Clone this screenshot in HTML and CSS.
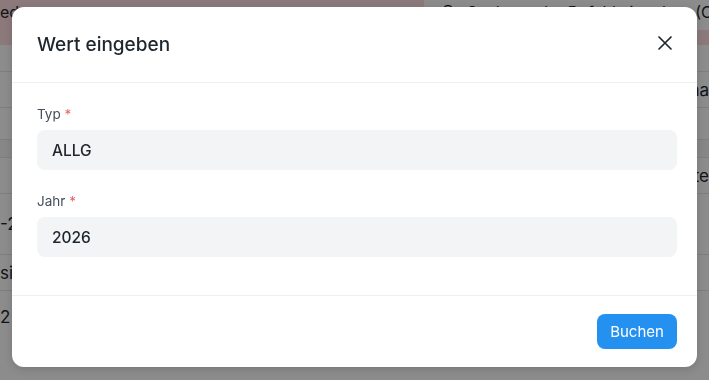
FILE: index.html
```html
<!DOCTYPE html>
<html>
  <head>
    <meta charset="utf-8">
    <title>Wert eingeben</title>
    <link rel="stylesheet" href="styles.css">
  </head>
  <body>
    <!-- page behind the dialog -->
    <div class="app">
      <div class="topbar">
        <div class="alert_strip"><span>ed</span></div>
        <div class="search">
          <svg class="search_icon" width="14" height="14" viewBox="0 0 14 14">
            <circle cx="6" cy="6" r="4.5" fill="none" stroke="#222" stroke-width="1.4"/>
            <path d="M9.5 9.5 L13 13" stroke="#222" stroke-width="1.4"/>
          </svg>
          <span>Suchen oder Befehl eingeben (Ct</span>
        </div>
      </div>
      <div class="alert_band"></div>
      <div class="rows">
        <div class="row row_tall"><span></span><span></span></div>
        <div class="row row_mid"><span></span><span>na</span></div>
        <div class="row row_small"><span></span><span></span></div>
        <div class="row row_band"><span></span><span></span></div>
        <div class="row row_mid"><span></span><span>te</span></div>
        <div class="row row_big"><span>-2</span><span></span></div>
        <div class="row row_mid"><span>si</span><span></span></div>
        <div class="row row_last"><span>2</span><span></span></div>
      </div>
    </div>

    <div class="backdrop"></div>

    <div class="modal">
      <div class="modal_header">
        <h4 class="modal_title">Wert eingeben</h4>
        <button class="close_btn" type="button" aria-label="Schließen">
          <svg width="16" height="16" viewBox="0 0 16 16">
            <path d="M2 2 L14 14 M14 2 L2 14" stroke="#1f272e" stroke-width="1.7" stroke-linecap="round"/>
          </svg>
        </button>
      </div>

      <div class="modal_body">
        <div class="form_group">
          <label class="control_label">Typ <span class="reqd">*</span></label>
          <div class="control_input">ALLG</div>
        </div>
        <div class="form_group">
          <label class="control_label">Jahr <span class="reqd">*</span></label>
          <div class="control_input">2026</div>
        </div>
      </div>

      <div class="modal_footer">
        <button class="btn_primary" type="button">Buchen</button>
      </div>
    </div>
  </body>
</html>
```

FILE: styles.css
```css
/* base */
body {
  margin: 0;
  font-family: Inter, "Noto Sans", sans-serif;
  color: #1f272e;
  overflow: hidden;
  height: 380px;
}

/* page behind the dialog */
.app {
  background: #fff;
  height: 380px;
}

.topbar {
  display: flex;
  height: 30px;
}

.alert_strip {
  width: 424px;
  flex-shrink: 0;
  background: #ffdce2;
  font-size: 16px;
  line-height: 24px;
  color: #1f272e;
}

.search {
  flex: 1;
  display: flex;
  align-items: flex-start;
  gap: 11px;
  padding: 2px 0 0 18px;
  font-size: 16px;
  white-space: nowrap;
  overflow: hidden;
  color: #1f272e;
}

.search_icon {
  margin-top: 2px;
  flex-shrink: 0;
}

.alert_band {
  height: 15px;
  background: #ffdce2;
}

.row {
  display: flex;
  justify-content: space-between;
  border-bottom: 1px solid #e6e6e6;
  font-size: 17px;
  color: #1f272e;
  white-space: nowrap;
  align-items: center;
}

.row_tall { height: 26px; }
.row_mid { height: 35px; }
.row_small { height: 31px; }
.row_band { height: 17px; background: #f6f6f6; }
.row_big { height: 60px; }
.row_last { height: 52px; border-bottom: none; }

.backdrop {
  position: fixed;
  inset: 0;
  background: rgba(0, 0, 0, 0.45);
}

/* dialog */
.modal {
  position: absolute;
  top: 7px;
  left: 12px;
  width: 685px;
  height: 360px;
  background: #fff;
  border-radius: 12px;
  box-shadow: 0 2px 8px rgba(0, 0, 0, 0.15);
  display: flex;
  flex-direction: column;
}

.modal_header {
  height: 75px;
  flex-shrink: 0;
  display: flex;
  align-items: center;
  justify-content: space-between;
  padding: 0 24px 0 25px;
  border-bottom: 1px solid #eef0f2;
}

.modal_title {
  margin: 0;
  font-size: 19px;
  font-weight: 500;
  color: #1f272e;
}

.close_btn {
  border: none;
  background: none;
  padding: 0;
  width: 16px;
  height: 16px;
  display: flex;
  margin-top: -3px;
}

.modal_body {
  padding: 23px 20px 38px 25px;
  border-bottom: 1px solid #eef0f2;
}

.form_group + .form_group {
  margin-top: 23px;
}

.control_label {
  display: block;
  font-size: 13.5px;
  line-height: 16px;
  color: #454e58;
  margin-bottom: 8px;
}

.reqd {
  color: #e76565;
}

.control_input {
  height: 40px;
  box-sizing: border-box;
  display: flex;
  align-items: center;
  padding: 0 15px;
  background: #f3f4f6;
  border-radius: 8px;
  font-size: 15.5px;
  font-weight: 500;
  color: #1f272e;
}

.modal_footer {
  flex: 1;
  display: flex;
  justify-content: flex-end;
  align-items: flex-start;
  padding: 18px 20px 0 0;
}

.btn_primary {
  height: 35px;
  width: 80px;
  border: none;
  border-radius: 8px;
  background: #2490ef;
  color: #fff;
  font-family: Inter, "Noto Sans", sans-serif;
  font-size: 15px;
  font-weight: 400;
  padding: 0;
}
```
